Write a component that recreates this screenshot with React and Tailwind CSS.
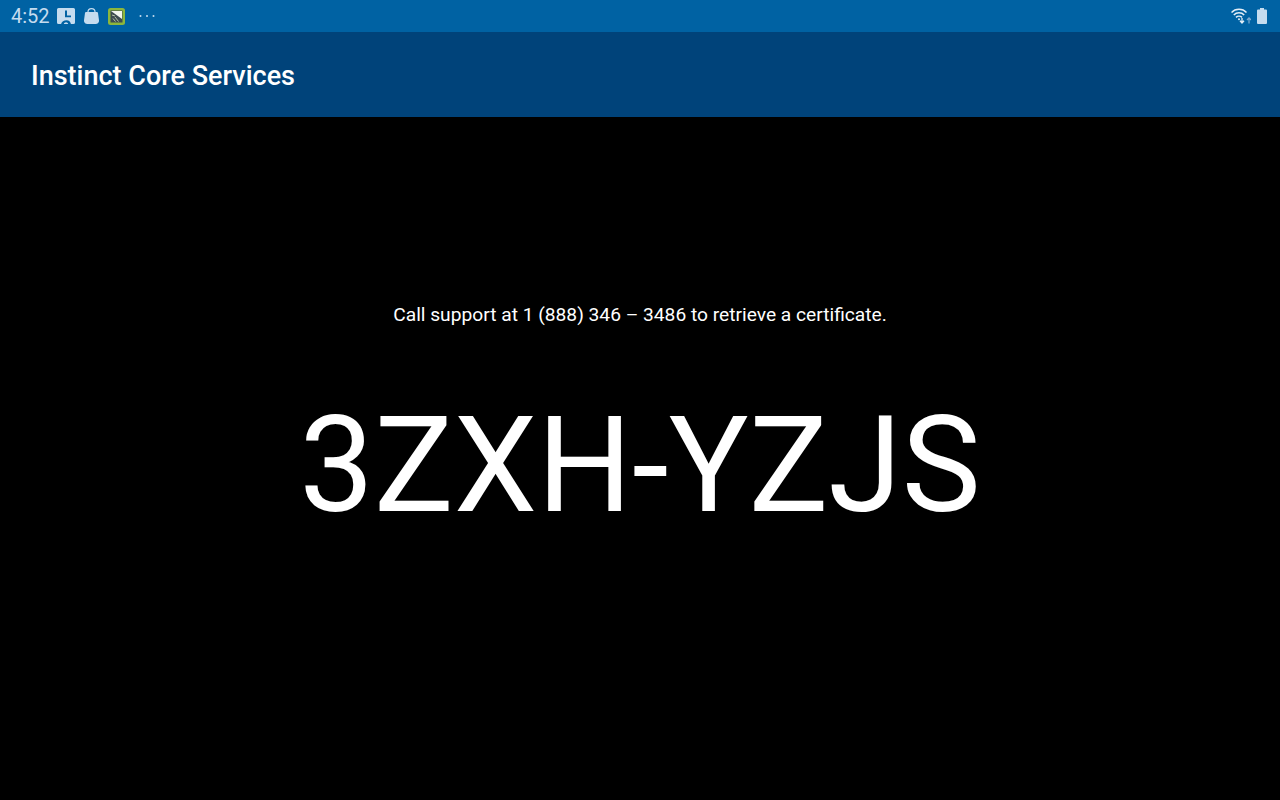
import React from 'react';

const PhotoIcon = () => (
  <svg width="18" height="16" viewBox="0 0 18 16" className="text-[#c5dcef]">
    <path fill="currentColor" fillRule="evenodd" d="M1.500 0h15A1.500 1.500 0 0 1 18 1.500v13a1.500 1.500 0 0 1-1.500 1.500h-2.600c-.4-2.200-1.900-3.800-4.400-3.800S4.500 13.800 4.100 16H1.500A1.500 1.500 0 0 1 0 14.500v-13A1.500 1.500 0 0 1 1.500 0zM8 2.500v6.800h6V7.500h-4v-5z" />
    <path fill="currentColor" d="M6.800 16c.3-1 1.200-1.700 2.200-1.700s1.900.7 2.200 1.700z" />
  </svg>
);

const BagIcon = () => (
  <svg width="15" height="16" viewBox="0 0 15 16" className="text-[#c5dcef]">
    <path fill="none" stroke="currentColor" strokeWidth="1.200" d="M4 5V3.800C4 1.900 5.500.6 7.500.6S11 1.900 11 3.800V5" />
    <path fill="currentColor" d="M2 4h11c.5 0 .9.400 1 .9l1 7.300c.3 2.100-1.200 3.800-3.300 3.800H3.300C1.200 16-.3 14.300 0 12.200l1-7.300c.1-.5.500-.9 1-.9z" />
  </svg>
);

const AppBadge = () => (
  <svg width="17" height="17" viewBox="0 0 17 17">
    <rect x="0" y="0" width="17" height="17" rx="2.500" fill="#8cb63c" />
    <rect x="2.500" y="2.500" width="12" height="12" fill="#3d4b50" />
    <path d="M3 3h11v8z" fill="#f2f5ee" />
    <path d="M7 9l3.500 4.500M5 10.500l2.500 3M4 7l3 1" stroke="#b9c4a8" strokeWidth="1" />
  </svg>
);

const MoreDots = () => (
  <svg width="16" height="4" viewBox="0 0 16 4" className="text-[#c5dcef]">
    <circle cx="1.500" cy="2" r="1" fill="currentColor" />
    <circle cx="8" cy="2" r="1" fill="currentColor" />
    <circle cx="14.500" cy="2" r="1" fill="currentColor" />
  </svg>
);

const WifiIcon = () => (
  <svg width="20" height="16" viewBox="0 0 20 16" fill="none" className="text-[#e4eef6]">
    <path stroke="currentColor" strokeWidth="1.500" d="M.5 4.500C4.500.3 11.500.3 15.500 4.500" />
    <path stroke="currentColor" strokeWidth="1.500" d="M2.800 7c2.800-2.900 7.600-2.900 10.400 0" />
    <path stroke="currentColor" strokeWidth="1.500" d="M5 9.400c1.600-1.500 4.400-1.500 6 0" />
    <circle cx="8" cy="11.200" r="1" fill="currentColor" />
    <path stroke="currentColor" strokeWidth="1.300" d="M11 10v5M9 12.800l2 2.200 2-2.200" />
    <path stroke="#7fabcf" strokeWidth="1.200" d="M18 15.500v-5.500M16 12l2-2.200 2 2.200" />
  </svg>
);

const BatteryIcon = () => (
  <svg width="10" height="16" viewBox="0 0 10 16" className="text-[#c5dcef]">
    <path fill="currentColor" d="M3 0h4v1.500h2a1 1 0 0 1 1 1V15a1 1 0 0 1-1 1H1a1 1 0 0 1-1-1V2.500a1 1 0 0 1 1-1h2z" />
  </svg>
);

const App = () => {
  return (
    <div className="flex flex-col w-full h-screen bg-black font-['Roboto',sans-serif] text-white overflow-hidden">
      <div className="flex items-center justify-between h-8 bg-[#0062a3] pl-[11px] pr-[13px]">
        <div className="flex items-center">
          <span className="text-[20px] leading-8 text-[#c5dcef] w-[46px]">4:52</span>
          <PhotoIcon />
          <span className="w-[9px]" />
          <BagIcon />
          <span className="w-[9px]" />
          <AppBadge />
          <span className="ml-[14px] flex -mt-[1px]">
            <MoreDots />
          </span>
        </div>
        <div className="flex items-center gap-[6px] -mt-[1px]">
          <WifiIcon />
          <BatteryIcon />
        </div>
      </div>

      <div className="flex items-center h-[85px] bg-[#00437a] px-[31px]">
        <h1 className="text-[27px] font-medium pt-[4px]">Instinct Core Services</h1>
      </div>

      <div className="flex flex-col items-center flex-1 pt-[185px]">
        <p className="text-[19.200px] leading-[26px]">Call support at 1 (888) 346 – 3486 to retrieve a certificate.</p>
        <p className="mt-[59px] text-[133px] leading-[157px]">3ZXH-YZJS</p>
      </div>
    </div>
  );
};

export default App;
